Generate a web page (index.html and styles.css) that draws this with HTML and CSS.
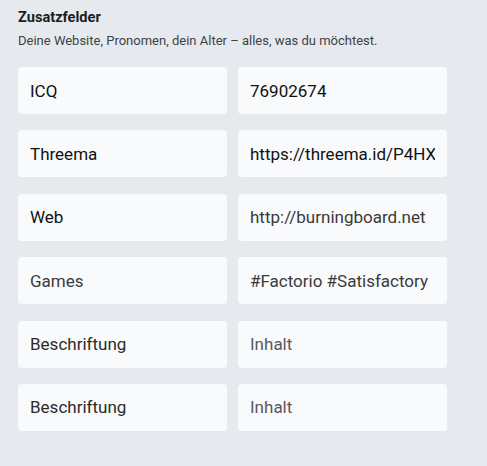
FILE: index.html
```html
<!DOCTYPE html>
<html lang="de">
<head>
<meta charset="utf-8">
<link rel="stylesheet" href="styles.css">
</head>
<body>
<section class="panel">
  <h2 class="title">Zusatzfelder</h2>
  <p class="desc">Deine Website, Pronomen, dein Alter – alles, was du möchtest.</p>
  <div class="fields">
    <div class="field strong"><span class="val">ICQ</span></div>
    <div class="field strong"><span class="val">76902674</span></div>
    <div class="field strong"><span class="val">Threema</span></div>
    <div class="field strong"><span class="val">https://threema.id/P4HX</span></div>
    <div class="field strong"><span class="val">Web</span></div>
    <div class="field soft"><span class="val">http://burningboard.net</span></div>
    <div class="field soft"><span class="val">Games</span></div>
    <div class="field soft"><span class="val">#Factorio #Satisfactory</span></div>
    <div class="field label"><span class="val">Beschriftung</span></div>
    <div class="field placeholder"><span class="val">Inhalt</span></div>
    <div class="field label"><span class="val">Beschriftung</span></div>
    <div class="field placeholder"><span class="val">Inhalt</span></div>
  </div>
</section>
</body>
</html>
```
FILE: styles.css
```css
html, body {
  margin: 0;
  padding: 0;
  background: #e6eaee;
}
body {
  width: 487px;
  height: 466px;
  overflow: hidden;
  font-family: Roboto, "Liberation Sans", sans-serif;
}
.panel {
  padding: 8px 18px 0 18px;
}
.title {
  margin: 0;
  font-size: 14.6px;
  line-height: 18px;
  font-weight: 700;
  color: #1b1e21;
}
.desc {
  margin: 7px 0 0 0;
  font-size: 13px;
  line-height: 16px;
  color: #3d4246;
}
.fields {
  margin-top: 18px;
  display: grid;
  grid-template-columns: 209px 209px;
  column-gap: 11px;
  row-gap: 16.4px;
}
.field {
  height: 47px;
  box-sizing: border-box;
  background: #f9fafb;
  border-radius: 4px;
  padding: 0 12px;
  display: flex;
  align-items: center;
  font-size: 17px;
  white-space: nowrap;
  min-width: 0;
}
.val {
  display: block;
  min-width: 0;
  overflow: hidden;
  flex: 1 1 auto;
}
.strong { color: #111; }
.soft { color: #3a3a3a; }
.label { color: #2b2b2b; }
.placeholder { color: #595959; }
```
